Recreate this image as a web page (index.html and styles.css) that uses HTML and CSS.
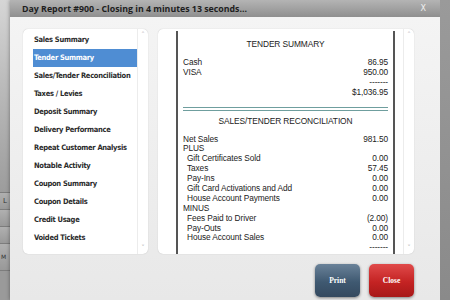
FILE: index.html
```html
<!DOCTYPE html>
<html>
<head>
<meta charset="utf-8">
<link rel="stylesheet" href="styles.css">
</head>
<body>
<div class="stage">
  <div class="bg-left">
    <div class="bgl-top"></div>
    <div class="bgl-row bgl-l">L</div>
    <div class="bgl-row"></div>
    <div class="bgl-row"></div>
    <div class="bgl-row bgl-m">M</div>
    <div class="bgl-rest"></div>
  </div>
  <div class="dialog">
    <div class="header">
      <span class="title">Day Report #900 - Closing in 4 minutes 13 seconds...</span>
      <span class="close-x">X</span>
    </div>
    <div class="body">
      <div class="panels">
        <div class="panel nav">
          <ul class="nav-list">
            <li>Sales Summary</li>
            <li class="sel">Tender Summary</li>
            <li>Sales/Tender Reconciliation</li>
            <li>Taxes / Levies</li>
            <li>Deposit Summary</li>
            <li>Delivery Performance</li>
            <li>Repeat Customer Analysis</li>
            <li>Notable Activity</li>
            <li>Coupon Summary</li>
            <li>Coupon Details</li>
            <li>Credit Usage</li>
            <li>Voided Tickets</li>
          </ul>
          <div class="scroll"><span class="arr">&#710;</span><span class="arr">&#711;</span></div>
        </div>
        <div class="panel report">
          <div class="gutter"></div>
          <div class="receipt">
            <div class="rtitle t1">TENDER SUMMARY</div>
            <div class="rrow r-first"><span>Cash</span><span>86.95</span></div>
            <div class="rrow"><span>VISA</span><span>950.00</span></div>
            <div class="rrow"><span></span><span>-------</span></div>
            <div class="rrow"><span></span><span>$1,036.95</span></div>
            <div class="dbl"></div>
            <div class="rtitle t2">SALES/TENDER RECONCILIATION</div>
            <div class="rrow r-first"><span>Net Sales</span><span>981.50</span></div>
            <div class="rrow"><span>PLUS</span><span></span></div>
            <div class="rrow ind"><span>Gift Certificates Sold</span><span>0.00</span></div>
            <div class="rrow ind"><span>Taxes</span><span>57.45</span></div>
            <div class="rrow ind"><span>Pay-Ins</span><span>0.00</span></div>
            <div class="rrow ind"><span>Gift Card Activations and Add</span><span>0.00</span></div>
            <div class="rrow ind"><span>House Account Payments</span><span>0.00</span></div>
            <div class="rrow"><span>MINUS</span><span></span></div>
            <div class="rrow ind"><span>Fees Paid to Driver</span><span>(2.00)</span></div>
            <div class="rrow ind"><span>Pay-Outs</span><span>0.00</span></div>
            <div class="rrow ind"><span>House Account Sales</span><span>0.00</span></div>
            <div class="rrow"><span></span><span>-------</span></div>
          </div>
          <div class="gutter2"></div>
          <div class="scroll"><span class="arr">&#710;</span><span class="arr">&#711;</span></div>
        </div>
      </div>
      <div class="buttons">
        <div class="btn print">Print</div>
        <div class="btn close">Close</div>
      </div>
    </div>
  </div>
  <div class="bg-right"></div>
</div>
</body>
</html>
```

FILE: styles.css
```css
html, body {
  margin: 0;
  padding: 0;
  width: 450px;
  height: 300px;
  overflow: hidden;
  background: #8c8c8c;
}
.stage {
  display: flex;
  width: 450px;
  height: 300px;
}
.bg-left {
  width: 10px;
  display: flex;
  flex-direction: column;
  background: #a9a9a9;
  font-family: "DejaVu Sans", sans-serif;
  font-size: 7px;
  color: #333;
}
.bgl-top {
  height: 192px;
  background: linear-gradient(170deg, #d6d6d6 0%, #bdbdbd 40%, #9c9c9c 100%);
}
.bgl-row {
  height: 16px;
  border-top: 1px solid #7d7d7d;
  background: linear-gradient(#b0b0b0, #999);
  padding-left: 3px;
  line-height: 16px;
  overflow: hidden;
}
.bgl-m {
  height: 26px;
  line-height: 26px;
  padding-left: 1px;
  font-size: 6px;
}
.bgl-rest {
  flex: 1;
  border-top: 1px solid #7d7d7d;
  background: #9a9a9a;
}
.bg-right {
  flex: 1;
  background: linear-gradient(#9a9a9a, #8a8a8a);
}
.dialog {
  width: 430px;
  display: flex;
  flex-direction: column;
  background: #ececec;
  box-shadow: 0 0 4px rgba(0,0,0,0.4);
}
.header {
  height: 17px;
  display: flex;
  align-items: center;
  justify-content: space-between;
  padding: 0 12px 0 12px;
  background: linear-gradient(#b4b4b4, #8f8f8f);
  font-family: "Open Sans", sans-serif;
}
.title {
  font-weight: 700;
  font-size: 8.8px;
  color: #1e1e1e;
}
.close-x {
  font-size: 8px;
  color: #f0f0f0;
  font-family: "DejaVu Sans", sans-serif;
  margin-right: 2px;
}
.body {
  flex: 1;
  display: flex;
  flex-direction: column;
  padding: 12px 26px 0 13px;
  background: linear-gradient(#f4f4f4, #e8e8e8);
}
.panels {
  display: flex;
  gap: 10px;
  height: 225px;
}
.panel {
  background: #fff;
  border-radius: 5px;
  display: flex;
  box-shadow: 0 0 1px rgba(0,0,0,0.25);
}
.nav {
  width: 125px;
}
.nav-list {
  list-style: none;
  margin: 0;
  padding: 2px 0 0 10px;
  flex: 1;
  font-family: "DejaVu Sans Condensed", "DejaVu Sans", sans-serif;
  font-weight: 700;
  font-size: 7.5px;
  letter-spacing: -0.3px;
  color: #2b2b2b;
}
.nav-list li {
  height: 18px;
  line-height: 18px;
  padding-left: 1px;
  white-space: nowrap;
}
.nav-list li.sel {
  background: #4f8dd3;
  color: #fff;
}
.scroll {
  width: 10px;
  border-left: 1px solid #ececec;
  display: flex;
  flex-direction: column;
  justify-content: space-between;
  align-items: center;
  font-family: "DejaVu Sans", sans-serif;
  font-size: 7px;
  color: #aaa;
  padding: 2px 0;
}
.arr {
  height: 8px;
  line-height: 8px;
}
.report {
  flex: 1;
}
.gutter {
  width: 18px;
}
.gutter2 {
  width: 8px;
}
.receipt {
  flex: 1;
  border-left: 2px solid #555;
  border-right: 2px solid #555;
  padding: 8px 5px 0 5px;
  font-family: "Liberation Sans", Arial, sans-serif;
  font-size: 8.3px;
  color: #222;
  letter-spacing: -0.1px;
  margin: 2px 0 0 0;
}
.rtitle {
  text-align: center;
  height: 10px;
  line-height: 10px;
  font-size: 8.4px;
}
.rrow {
  display: flex;
  justify-content: space-between;
  height: 9.9px;
  line-height: 9.9px;
  white-space: nowrap;
}
.rrow.ind {
  padding-left: 4px;
}
.r-first {
  margin-top: 9px;
}
.dbl {
  margin-top: 9px;
  height: 2px;
  border-top: 1px solid #6f9e9e;
  border-bottom: 1px solid #6f9e9e;
}
.t2 {
  margin-top: 5px;
}
.buttons {
  display: flex;
  justify-content: flex-end;
  gap: 9px;
  margin-top: 10px;
}
.btn {
  width: 45px;
  height: 33px;
  border-radius: 5px;
  display: flex;
  align-items: center;
  justify-content: center;
  font-family: "Liberation Serif", serif;
  font-weight: 700;
  font-size: 7.5px;
  color: #fff;
  box-shadow: 0 1px 3px rgba(0,0,0,0.45);
}
.print {
  background: linear-gradient(#6a8299, #3f5971 55%, #34495f);
}
.close {
  background: linear-gradient(#e04a4a, #c42323 55%, #a71818);
}
```
